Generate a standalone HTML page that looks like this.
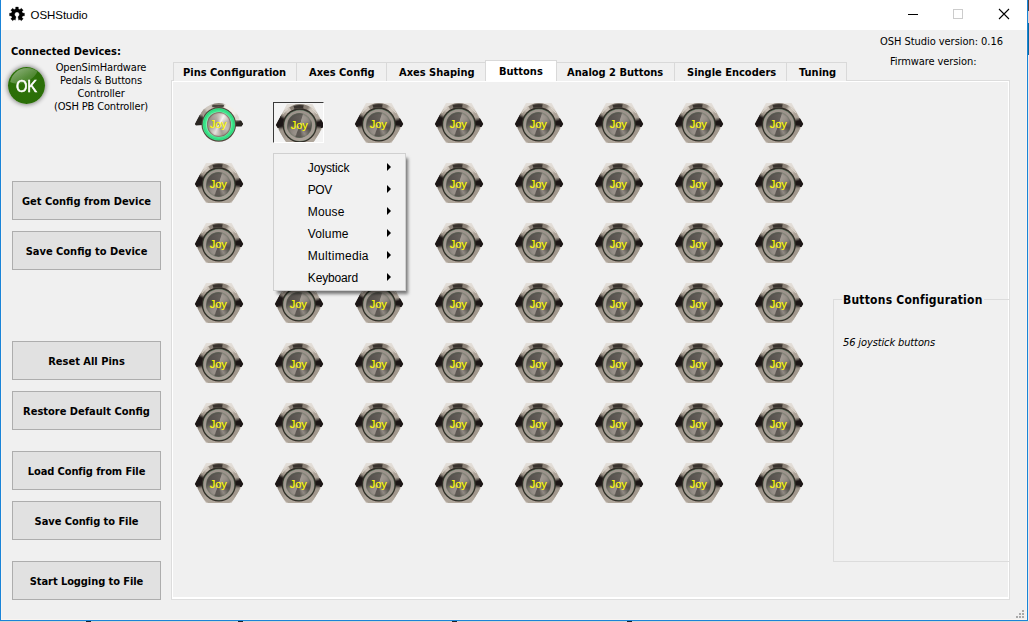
<!DOCTYPE html>
<html lang="en">
<head>
<meta charset="utf-8">
<title>OSHStudio</title>
<style>
*{box-sizing:border-box;margin:0;padding:0}
html,body{width:1029px;height:622px;overflow:hidden;background:#f0f0f0}
body{position:relative;font-family:"DejaVu Sans Condensed","DejaVu Sans","Liberation Sans",sans-serif;font-size:11px;font-stretch:condensed;color:#000}
.abs{position:absolute}
.t{position:absolute;white-space:nowrap;line-height:13px;height:13px}
.b{font-weight:bold}
/* window chrome */
#titlebar{left:1px;top:0;width:1026px;height:30px;background:#fff}
#title{left:30.500px;top:8px;font:11.500px/14px "Liberation Sans",sans-serif;letter-spacing:-0.050px}
#bl{left:0;top:0;width:1px;height:621px;background:#1a84d8}
#br{left:1027px;top:0;width:1px;height:621px;background:#1a84d8}
#bb{left:0;top:620px;width:1028px;height:1px;background:#1a84d8}
#il{left:1px;top:30px;width:1px;height:590px;background:#f9f4f0}
#ir{left:1026px;top:30px;width:1px;height:590px;background:#f9f4f0}
#ib{left:1px;top:619px;width:1026px;height:1px;background:#faf5f1}
#outr{left:1028px;top:0;width:1px;height:622px;background:linear-gradient(#4a4545 0,#4a4545 11px,#ddd5d0 11px,#ddd5d0 23px,#0a6a9a 23px,#0a6a9a 55px,#ececec 55px)}
#outb{left:0;top:621px;width:1029px;height:1px;background:linear-gradient(90deg,#d8d3ce 86px,#222 86px,#222 91px,#d8d3ce 91px,#d8d3ce 238px,#222 238px,#222 243px,#d8d3ce 243px,#d8d3ce 452px,#222 452px,#222 457px,#d8d3ce 457px,#d8d3ce 627px,#222 627px,#222 632px,#d8d3ce 632px)}
/* left push buttons */
.pb{position:absolute;left:12px;width:149px;height:39px;background:#e1e1e1;border:1px solid #adadad;font-weight:bold;text-align:center;line-height:39.500px;white-space:nowrap;overflow:hidden}
/* tabs */
.tab{position:absolute;top:62px;height:19px;border:1px solid #d9d9d9;border-bottom:none;background:#f0f0f0}
.tab.sel{top:60px;height:21px;background:#fff;border-color:#d9d9d9}
.tl{position:absolute;top:66px;font-weight:bold;white-space:nowrap;line-height:13px}
/* joy buttons */
.jb{position:absolute;width:50px;height:42px}
.jb svg{position:absolute;left:0;top:0;width:50px;height:42px;overflow:visible}
.jb b{position:absolute;left:-.700px;top:15.600px;width:50px;text-align:center;font:11px/13px "Liberation Sans",sans-serif;color:#ff0;letter-spacing:0;-webkit-text-stroke:.15px #ff0}
.face{position:absolute;left:12.100px;top:9.700px;width:25.400px;height:25.400px;border-radius:50%;border:.5px solid rgba(85,105,85,.4);background:conic-gradient(from 11deg,#645f5a 0deg,#645f5a 3deg,#a19a92 9deg,#9c958d 30deg,#8c857e 55deg,#625d58 80deg,#544f4b 97deg,#716b65 118deg,#918a83 138deg,#7c766f 150deg,#605b56 162deg,#5c5752 185deg,#9a938b 193deg,#948d86 212deg,#867f78 235deg,#5f5a55 258deg,#534e4a 275deg,#5a5551 310deg,#605b56 340deg,#645f5a 360deg);box-shadow:inset 0 0 1.500px rgba(40,36,33,.3)}
.face.lit{left:12.500px;top:10.100px;width:24.600px;height:24.600px;border:.6px solid rgba(105,85,70,.65);box-shadow:inset 0 0 1.500px rgba(90,80,70,.6);background:conic-gradient(from 0deg,#c9c2bb 0deg,#f6f3f0 30deg,#b7afa7 75deg,#c5beb6 120deg,#a59d95 160deg,#e6e2dd 205deg,#a9a199 250deg,#9d958d 300deg,#b5ada5 340deg,#c9c2bb 360deg)}
.pressed{overflow:hidden;background:#f4f4f4;border-top:1px solid #3a3a3a;border-left:1px solid #3a3a3a;border-right:1px solid #fff;border-bottom:1px solid #fff}
/* menu */
#menu{left:273px;top:153px;width:133px;height:138px;background:#f1f1f1;border:1px solid #d0d0d0;box-shadow:3px 4px 3px -1px rgba(0,0,0,.5)}
.mi{position:absolute;left:33.800px;font:12px/14px "Liberation Sans",sans-serif;white-space:nowrap}
.ma{position:absolute;left:113px;width:0;height:0;border-left:4px solid #000;border-top:4px solid transparent;border-bottom:4px solid transparent}
</style>
</head>
<body>
<!-- title bar -->
<div class="abs" id="titlebar"></div>
<svg class="abs" style="left:7px;top:5px;overflow:visible" width="20" height="20" viewBox="-10 -9.500 20 20"><path fill="#000" stroke="#000" stroke-width=".3" stroke-linejoin="round" d="M-1.74 5.69 L-2.92 4.95 L-4.36 6.23 L-6.23 4.36 L-4.95 2.92 L-5.57 1.44 L-7.48 1.32 L-7.48 -1.32 L-5.57 -1.44 L-4.95 -2.92 L-6.23 -4.36 L-4.36 -6.23 L-2.92 -4.95 L-1.44 -5.57 L-1.32 -7.48 L1.32 -7.48 L1.44 -5.57 L2.92 -4.95 L4.36 -6.23 L6.23 -4.36 L4.95 -2.92 L5.57 -1.44 L7.48 -1.32 L7.48 1.32 L5.57 1.44 L4.95 2.92 L6.23 4.36 L4.36 6.23 L2.92 4.95 L1.74 5.69 L0.95 2.20 A2.4 2.4 0 1 0 -0.95 2.20 Z"/></svg>
<div class="t" id="title">OSHStudio</div>
<svg class="abs" style="left:900px;top:0" width="120" height="30" viewBox="0 0 120 30" shape-rendering="crispEdges">
<rect x="8" y="14" width="10" height="1" fill="#000"/>
<rect x="53.500" y="9.500" width="9" height="9" fill="none" stroke="#ccc" stroke-width="1"/>
<g shape-rendering="auto"><path d="M99 9l10 10M109 9l-10 10" stroke="#000" stroke-width="1.100" fill="none"/></g>
</svg>

<!-- left column -->
<div class="t b" style="left:11px;top:44.600px">Connected Devices:</div>
<div class="abs" id="ok" style="left:7.700px;top:66.500px;width:37.600px;height:37.600px;border-radius:50%;background:radial-gradient(circle at 50% 50%,#2d7209 0,#2b6e08 70%,#235f05 100%);box-shadow:0 0 4px 1px rgba(0,0,0,.42)"></div>
<div class="abs" style="left:9.500px;top:67.800px;width:34px;height:34px;border-radius:50%;overflow:hidden"><div class="abs" style="left:-7px;top:-12px;width:36px;height:27px;border-radius:50%;transform:rotate(-22deg);background:linear-gradient(172deg,rgba(255,255,255,.7),rgba(255,255,255,.2) 80%,rgba(255,255,255,.12))"></div></div>
<div class="t" style="left:7px;top:77.300px;width:39px;height:20px;text-align:center;font:15.600px/20px 'Liberation Sans',sans-serif;color:#fff;transform:scaleX(.94);-webkit-text-stroke:.55px #fff">OK</div>
<div class="t" style="left:50px;top:61px;width:102px;text-align:center;letter-spacing:-.15px">OpenSimHardware</div>
<div class="t" style="left:50px;top:74px;width:102px;text-align:center;letter-spacing:-.15px">Pedals &amp; Buttons</div>
<div class="t" style="left:50px;top:87px;width:102px;text-align:center;letter-spacing:-.15px">Controller</div>
<div class="t" style="left:50px;top:100px;width:102px;text-align:center;letter-spacing:-.15px">(OSH PB Controller)</div>

<div class="pb" style="top:181px">Get Config from Device</div>
<div class="pb" style="top:231px">Save Config to Device</div>
<div class="pb" style="top:341px">Reset All Pins</div>
<div class="pb" style="top:391px">Restore Default Config</div>
<div class="pb" style="top:451px;letter-spacing:-.1px">Load Config from File</div>
<div class="pb" style="top:501px;letter-spacing:-.06px">Save Config to File</div>
<div class="pb" style="top:561px;letter-spacing:-.08px">Start Logging to File</div>

<!-- version labels -->
<div class="t" style="left:880px;top:35px;letter-spacing:-.05px">OSH Studio version: 0.16</div>
<div class="t" style="left:890px;top:55px;letter-spacing:-.09px">Firmware version:</div>

<!-- tab pane frame -->
<div class="abs" style="left:171px;top:80px;width:839px;height:520px;border-left:1px solid #dcdcdc;border-top:1px solid #dcdcdc;border-right:1px solid #dedede;border-bottom:1px solid #dedede"></div>
<div class="abs" style="left:172px;top:81px;width:837px;height:518px;border-left:1px solid #fff;border-top:1px solid #fff;border-right:1px solid #fff;border-bottom:2px solid #fff"></div>

<!-- tabs -->
<div class="tab" style="left:173px;width:124px"></div>
<div class="tab" style="left:296px;width:91px"></div>
<div class="tab" style="left:386px;width:100px"></div>
<div class="tab" style="left:556px;width:119px"></div>
<div class="tab" style="left:674px;width:113px"></div>
<div class="tab" style="left:786px;width:61px"></div>
<div class="tab sel" style="left:485px;width:72px"></div>
<div class="tl" style="left:183px">Pins Configuration</div>
<div class="tl" style="left:309px">Axes Config</div>
<div class="tl" style="left:399px">Axes Shaping</div>
<div class="tl" style="left:499px;top:65px">Buttons</div>
<div class="tl" style="left:567px">Analog 2 Buttons</div>
<div class="tl" style="left:687px">Single Encoders</div>
<div class="tl" style="left:799px">Tuning</div>

<!-- group box -->
<div class="abs" style="left:833px;top:299px;width:176px;height:263px;border:1px solid #dcdcdc;border-right:none"></div>
<div class="t b" style="left:842px;top:293px;font-size:12px;letter-spacing:.22px;line-height:15px;height:15px;background:#f0f0f0;padding:0 1px">Buttons Configuration</div>
<div class="t" style="left:843px;top:336px;font-style:italic;letter-spacing:-.12px">56 joystick buttons</div>

<!-- size grip -->
<svg class="abs" style="left:1015px;top:609px" width="10" height="10" shape-rendering="crispEdges" fill="#a9a9a9"><rect x="7" y="1" width="2" height="2"/><rect x="4" y="4" width="2" height="2"/><rect x="7" y="4" width="2" height="2"/><rect x="1" y="7" width="2" height="2"/><rect x="4" y="7" width="2" height="2"/><rect x="7" y="7" width="2" height="2"/></svg>

<svg width="0" height="0" style="position:absolute">
<defs>
<linearGradient id="gHex" x1="0" y1="-20" x2="0" y2="20" gradientUnits="userSpaceOnUse">
<stop offset="0" stop-color="#e4dfd9"/><stop offset=".5" stop-color="#d2cbc3"/><stop offset=".56" stop-color="#c4bcb3"/><stop offset=".9" stop-color="#c2bab1"/><stop offset="1" stop-color="#d0c9c2"/>
</linearGradient>
<linearGradient id="gBev" x1="0" y1="-14" x2="0" y2="17" gradientUnits="userSpaceOnUse">
<stop offset="0" stop-color="#9b928a"/><stop offset="1" stop-color="#aaa198"/>
</linearGradient>
<clipPath id="cBez"><circle cx="-0.2" cy="1.4" r="21.300"/></clipPath>
<clipPath id="cHex"><polygon points="-24.200,1 -13,-20 12.500,-20 24.300,1 12.500,20 -13,20"/></clipPath>
<filter id="fB" x="-20%" y="-20%" width="140%" height="140%"><feGaussianBlur stdDeviation=".8"/></filter>
<filter id="fB2" x="-30%" y="-30%" width="160%" height="160%"><feGaussianBlur stdDeviation=".4"/></filter>
<g id="nut">
<polygon points="-24.200,1 -13,-20 12.500,-20 24.300,1 12.500,20 -13,20" fill="url(#gHex)"/>
<g clip-path="url(#cHex)">
<g filter="url(#fB2)">
<polygon points="-24.800,1 -19.300,-9 -15,-10.500 -15,3.900 -22.700,3.900" fill="#1a1613"/>
<polygon points="24.900,1 21.800,-4.500 15,-5.500 15,3.900 22.900,3.900" fill="#1a1613"/>
</g>
<g clip-path="url(#cBez)"><g filter="url(#fB)">
<path d="M-0.2 1.4L-8.41 -21.15A24 24 0 0 1 6.42 -21.67Z" fill="#7d746a"/>
<path d="M-0.2 1.4L6.42 -21.67A24 24 0 0 1 11.80 -19.38Z" fill="#8a8177"/>
<path d="M-0.2 1.4L11.80 -19.38A24 24 0 0 1 18.19 -14.03Z" fill="#cdc4ba"/>
<path d="M-0.2 1.4L18.19 -14.03A24 24 0 0 1 22.87 -5.22Z" fill="#aea499"/>
<path d="M-0.2 1.4L22.87 -5.22A24 24 0 0 1 23.50 5.15Z" fill="#1d1915"/>
<path d="M-0.2 1.4L23.57 4.74A24 24 0 0 1 18.19 16.83Z" fill="#a0978c"/>
<path d="M-0.2 1.4L18.19 16.83A24 24 0 0 1 -18.59 16.83Z" fill="#aea59a"/>
<path d="M-0.2 1.4L-18.59 16.83A24 24 0 0 1 -23.97 4.74Z" fill="#a0978c"/>
<path d="M-0.2 1.4L-23.90 5.15A24 24 0 0 1 -21.39 -9.87Z" fill="#1d1915"/>
<path d="M-0.2 1.4L-21.39 -9.87A24 24 0 0 1 -17.46 -15.27Z" fill="#a69c91"/>
<path d="M-0.2 1.4L-17.46 -15.27A24 24 0 0 1 -8.41 -21.15Z" fill="#c9c0b6"/>
</g>
<g filter="url(#fB2)"><path d="M-9.80 -15.23A19.2 19.2 0 0 1 7.61 -16.14" fill="none" stroke="#8a8076" stroke-width="3.4"/><path d="M-6.04 -16.57A18.9 18.9 0 0 1 3.41 -17.15" fill="none" stroke="#39332e" stroke-width="3.2"/><path d="M-17.20 -10.06A20.5 20.5 0 0 1 -11.66 -15.60" fill="none" stroke="#e6e0d9" stroke-width="1.0"/><path d="M11.85 -15.18A20.5 20.5 0 0 1 16.80 -10.06" fill="none" stroke="#e0d9d1" stroke-width="0.9"/></g>
</g></g>
<circle cx="-0.2" cy="1.4" r="17.100" fill="#312b26"/>
<circle cx="-0.2" cy="1.5499999999999998" r="15.900" fill="#4f6a54"/>
<circle cx="-0.2" cy="1.65" r="15.450" fill="url(#gBev)"/>
</g>
<g id="nutlit">
<g clip-path="url(#cHex)"><g filter="url(#fB2)">
<polygon points="-24.500,1 -20,-8 -16,-9.500 -16,2 -23.500,2.500" fill="#2a2521"/>
<polygon points="24.600,1 22.300,-2.600 16,-3 16,3.500 22.700,3.500" fill="#2a2521"/>
</g>
<g clip-path="url(#cBez)"><g filter="url(#fB)">
<path d="M-0.2 1.4L-8.41 -21.15A24 24 0 0 1 6.42 -21.67Z" fill="#8d847a"/><path d="M-0.2 1.4L6.42 -21.67A24 24 0 0 1 20.58 -10.60Z" fill="#f3efea"/><path d="M-0.2 1.4L-21.77 -9.12A24 24 0 0 1 -16.26 -16.44Z" fill="#a39a90"/><path d="M-0.2 1.4L-16.26 -16.44A24 24 0 0 1 -8.41 -21.15Z" fill="#cfc8c0"/><path d="M-0.2 1.4L20.58 -10.60A24 24 0 0 1 23.28 -3.59Z" fill="#ddd6ce"/>
</g>
<g filter="url(#fB2)"><path d="M-6.66 -16.36A18.9 18.9 0 0 1 4.69 -16.86" fill="none" stroke="#4a443e" stroke-width="2.6"/></g>
</g></g>
<circle cx="-0.2" cy="1.4" r="17.300" fill="#54463c"/>
<circle cx="-0.2" cy="1.4" r="16.200" fill="#3fe58c"/>
<circle cx="-0.2" cy="1.4" r="15.200" fill="none" stroke="#2fd87c" stroke-width="1"/>
<circle cx="-0.2" cy="1.4" r="12.900" fill="#7af0b0"/>
</g>
</defs>
</svg>
<div class="jb" style="left:194px;top:102px"><svg viewBox="-25 -21 50 42"><use href="#nutlit"/></svg><i class="face lit"></i><b>Joy</b></div>
<div class="abs pressed" style="left:273px;top:102px;width:51px;height:41px"><div class="jb" style="left:1px;top:0px"><svg viewBox="-25 -21 50 42"><use href="#nut"/></svg><i class="face"></i><b>Joy</b></div></div>
<div class="jb" style="left:354px;top:102px"><svg viewBox="-25 -21 50 42"><use href="#nut"/></svg><i class="face"></i><b>Joy</b></div>
<div class="jb" style="left:434px;top:102px"><svg viewBox="-25 -21 50 42"><use href="#nut"/></svg><i class="face"></i><b>Joy</b></div>
<div class="jb" style="left:514px;top:102px"><svg viewBox="-25 -21 50 42"><use href="#nut"/></svg><i class="face"></i><b>Joy</b></div>
<div class="jb" style="left:594px;top:102px"><svg viewBox="-25 -21 50 42"><use href="#nut"/></svg><i class="face"></i><b>Joy</b></div>
<div class="jb" style="left:674px;top:102px"><svg viewBox="-25 -21 50 42"><use href="#nut"/></svg><i class="face"></i><b>Joy</b></div>
<div class="jb" style="left:754px;top:102px"><svg viewBox="-25 -21 50 42"><use href="#nut"/></svg><i class="face"></i><b>Joy</b></div>
<div class="jb" style="left:194px;top:162px"><svg viewBox="-25 -21 50 42"><use href="#nut"/></svg><i class="face"></i><b>Joy</b></div>
<div class="jb" style="left:274px;top:162px"><svg viewBox="-25 -21 50 42"><use href="#nut"/></svg><i class="face"></i><b>Joy</b></div>
<div class="jb" style="left:354px;top:162px"><svg viewBox="-25 -21 50 42"><use href="#nut"/></svg><i class="face"></i><b>Joy</b></div>
<div class="jb" style="left:434px;top:162px"><svg viewBox="-25 -21 50 42"><use href="#nut"/></svg><i class="face"></i><b>Joy</b></div>
<div class="jb" style="left:514px;top:162px"><svg viewBox="-25 -21 50 42"><use href="#nut"/></svg><i class="face"></i><b>Joy</b></div>
<div class="jb" style="left:594px;top:162px"><svg viewBox="-25 -21 50 42"><use href="#nut"/></svg><i class="face"></i><b>Joy</b></div>
<div class="jb" style="left:674px;top:162px"><svg viewBox="-25 -21 50 42"><use href="#nut"/></svg><i class="face"></i><b>Joy</b></div>
<div class="jb" style="left:754px;top:162px"><svg viewBox="-25 -21 50 42"><use href="#nut"/></svg><i class="face"></i><b>Joy</b></div>
<div class="jb" style="left:194px;top:222px"><svg viewBox="-25 -21 50 42"><use href="#nut"/></svg><i class="face"></i><b>Joy</b></div>
<div class="jb" style="left:274px;top:222px"><svg viewBox="-25 -21 50 42"><use href="#nut"/></svg><i class="face"></i><b>Joy</b></div>
<div class="jb" style="left:354px;top:222px"><svg viewBox="-25 -21 50 42"><use href="#nut"/></svg><i class="face"></i><b>Joy</b></div>
<div class="jb" style="left:434px;top:222px"><svg viewBox="-25 -21 50 42"><use href="#nut"/></svg><i class="face"></i><b>Joy</b></div>
<div class="jb" style="left:514px;top:222px"><svg viewBox="-25 -21 50 42"><use href="#nut"/></svg><i class="face"></i><b>Joy</b></div>
<div class="jb" style="left:594px;top:222px"><svg viewBox="-25 -21 50 42"><use href="#nut"/></svg><i class="face"></i><b>Joy</b></div>
<div class="jb" style="left:674px;top:222px"><svg viewBox="-25 -21 50 42"><use href="#nut"/></svg><i class="face"></i><b>Joy</b></div>
<div class="jb" style="left:754px;top:222px"><svg viewBox="-25 -21 50 42"><use href="#nut"/></svg><i class="face"></i><b>Joy</b></div>
<div class="jb" style="left:194px;top:282px"><svg viewBox="-25 -21 50 42"><use href="#nut"/></svg><i class="face"></i><b>Joy</b></div>
<div class="jb" style="left:274px;top:282px"><svg viewBox="-25 -21 50 42"><use href="#nut"/></svg><i class="face"></i><b>Joy</b></div>
<div class="jb" style="left:354px;top:282px"><svg viewBox="-25 -21 50 42"><use href="#nut"/></svg><i class="face"></i><b>Joy</b></div>
<div class="jb" style="left:434px;top:282px"><svg viewBox="-25 -21 50 42"><use href="#nut"/></svg><i class="face"></i><b>Joy</b></div>
<div class="jb" style="left:514px;top:282px"><svg viewBox="-25 -21 50 42"><use href="#nut"/></svg><i class="face"></i><b>Joy</b></div>
<div class="jb" style="left:594px;top:282px"><svg viewBox="-25 -21 50 42"><use href="#nut"/></svg><i class="face"></i><b>Joy</b></div>
<div class="jb" style="left:674px;top:282px"><svg viewBox="-25 -21 50 42"><use href="#nut"/></svg><i class="face"></i><b>Joy</b></div>
<div class="jb" style="left:754px;top:282px"><svg viewBox="-25 -21 50 42"><use href="#nut"/></svg><i class="face"></i><b>Joy</b></div>
<div class="jb" style="left:194px;top:342px"><svg viewBox="-25 -21 50 42"><use href="#nut"/></svg><i class="face"></i><b>Joy</b></div>
<div class="jb" style="left:274px;top:342px"><svg viewBox="-25 -21 50 42"><use href="#nut"/></svg><i class="face"></i><b>Joy</b></div>
<div class="jb" style="left:354px;top:342px"><svg viewBox="-25 -21 50 42"><use href="#nut"/></svg><i class="face"></i><b>Joy</b></div>
<div class="jb" style="left:434px;top:342px"><svg viewBox="-25 -21 50 42"><use href="#nut"/></svg><i class="face"></i><b>Joy</b></div>
<div class="jb" style="left:514px;top:342px"><svg viewBox="-25 -21 50 42"><use href="#nut"/></svg><i class="face"></i><b>Joy</b></div>
<div class="jb" style="left:594px;top:342px"><svg viewBox="-25 -21 50 42"><use href="#nut"/></svg><i class="face"></i><b>Joy</b></div>
<div class="jb" style="left:674px;top:342px"><svg viewBox="-25 -21 50 42"><use href="#nut"/></svg><i class="face"></i><b>Joy</b></div>
<div class="jb" style="left:754px;top:342px"><svg viewBox="-25 -21 50 42"><use href="#nut"/></svg><i class="face"></i><b>Joy</b></div>
<div class="jb" style="left:194px;top:402px"><svg viewBox="-25 -21 50 42"><use href="#nut"/></svg><i class="face"></i><b>Joy</b></div>
<div class="jb" style="left:274px;top:402px"><svg viewBox="-25 -21 50 42"><use href="#nut"/></svg><i class="face"></i><b>Joy</b></div>
<div class="jb" style="left:354px;top:402px"><svg viewBox="-25 -21 50 42"><use href="#nut"/></svg><i class="face"></i><b>Joy</b></div>
<div class="jb" style="left:434px;top:402px"><svg viewBox="-25 -21 50 42"><use href="#nut"/></svg><i class="face"></i><b>Joy</b></div>
<div class="jb" style="left:514px;top:402px"><svg viewBox="-25 -21 50 42"><use href="#nut"/></svg><i class="face"></i><b>Joy</b></div>
<div class="jb" style="left:594px;top:402px"><svg viewBox="-25 -21 50 42"><use href="#nut"/></svg><i class="face"></i><b>Joy</b></div>
<div class="jb" style="left:674px;top:402px"><svg viewBox="-25 -21 50 42"><use href="#nut"/></svg><i class="face"></i><b>Joy</b></div>
<div class="jb" style="left:754px;top:402px"><svg viewBox="-25 -21 50 42"><use href="#nut"/></svg><i class="face"></i><b>Joy</b></div>
<div class="jb" style="left:194px;top:462px"><svg viewBox="-25 -21 50 42"><use href="#nut"/></svg><i class="face"></i><b>Joy</b></div>
<div class="jb" style="left:274px;top:462px"><svg viewBox="-25 -21 50 42"><use href="#nut"/></svg><i class="face"></i><b>Joy</b></div>
<div class="jb" style="left:354px;top:462px"><svg viewBox="-25 -21 50 42"><use href="#nut"/></svg><i class="face"></i><b>Joy</b></div>
<div class="jb" style="left:434px;top:462px"><svg viewBox="-25 -21 50 42"><use href="#nut"/></svg><i class="face"></i><b>Joy</b></div>
<div class="jb" style="left:514px;top:462px"><svg viewBox="-25 -21 50 42"><use href="#nut"/></svg><i class="face"></i><b>Joy</b></div>
<div class="jb" style="left:594px;top:462px"><svg viewBox="-25 -21 50 42"><use href="#nut"/></svg><i class="face"></i><b>Joy</b></div>
<div class="jb" style="left:674px;top:462px"><svg viewBox="-25 -21 50 42"><use href="#nut"/></svg><i class="face"></i><b>Joy</b></div>
<div class="jb" style="left:754px;top:462px"><svg viewBox="-25 -21 50 42"><use href="#nut"/></svg><i class="face"></i><b>Joy</b></div>

<div class="abs" id="menu">
<div class="mi" style="top:6.6px;letter-spacing:-0.15px">Joystick</div><i class="ma" style="top:8.7px"></i>
<div class="mi" style="top:28.6px;letter-spacing:-0.45px">POV</div><i class="ma" style="top:30.7px"></i>
<div class="mi" style="top:50.6px;letter-spacing:0.15px">Mouse</div><i class="ma" style="top:52.7px"></i>
<div class="mi" style="top:72.6px;letter-spacing:0.13px">Volume</div><i class="ma" style="top:74.7px"></i>
<div class="mi" style="top:94.6px;letter-spacing:0.3px">Multimedia</div><i class="ma" style="top:96.7px"></i>
<div class="mi" style="top:116.6px;letter-spacing:-0.15px">Keyboard</div><i class="ma" style="top:118.7px"></i>
</div>

<!-- window borders -->
<div class="abs" id="il"></div><div class="abs" id="ir"></div><div class="abs" id="ib"></div>
<div class="abs" id="bl"></div><div class="abs" id="br"></div><div class="abs" id="bb"></div>
<div class="abs" id="outr"></div><div class="abs" id="outb"></div>
</body>
</html>
